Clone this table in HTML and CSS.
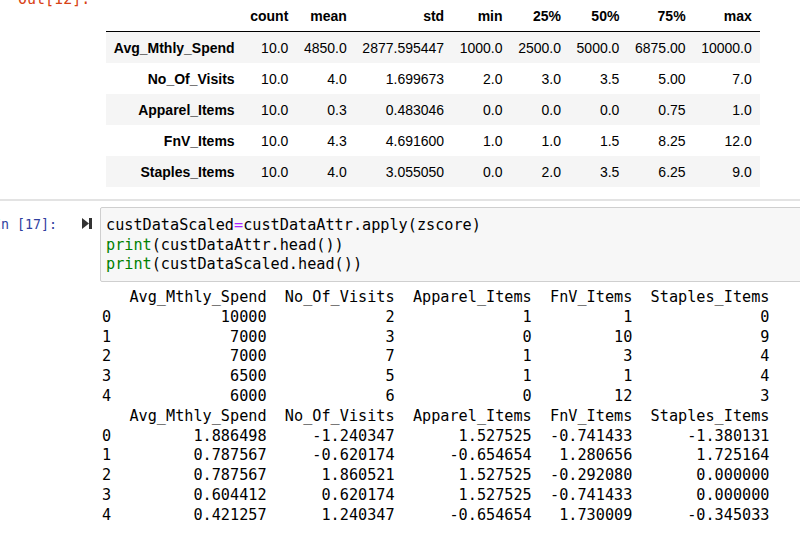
FILE: index.html
```html
<!DOCTYPE html>
<html>
<head>
<meta charset="utf-8">
<link rel="stylesheet" href="styles.css">
</head>
<body>
<div class="nb">
  <div class="out">
    <div class="out-prompt">Out[12]:</div>
    <table class="df">
      <thead>
        <tr><th></th><th>count</th><th>mean</th><th>std</th><th>min</th><th>25%</th><th>50%</th><th>75%</th><th>max</th></tr>
      </thead>
      <tbody>
        <tr><th>Avg_Mthly_Spend</th><td>10.0</td><td>4850.0</td><td>2877.595447</td><td>1000.0</td><td>2500.0</td><td>5000.0</td><td>6875.00</td><td>10000.0</td></tr>
        <tr><th>No_Of_Visits</th><td>10.0</td><td>4.0</td><td>1.699673</td><td>2.0</td><td>3.0</td><td>3.5</td><td>5.00</td><td>7.0</td></tr>
        <tr><th>Apparel_Items</th><td>10.0</td><td>0.3</td><td>0.483046</td><td>0.0</td><td>0.0</td><td>0.0</td><td>0.75</td><td>1.0</td></tr>
        <tr><th>FnV_Items</th><td>10.0</td><td>4.3</td><td>4.691600</td><td>1.0</td><td>1.0</td><td>1.5</td><td>8.25</td><td>12.0</td></tr>
        <tr><th>Staples_Items</th><td>10.0</td><td>4.0</td><td>3.055050</td><td>0.0</td><td>2.0</td><td>3.5</td><td>6.25</td><td>9.0</td></tr>
      </tbody>
    </table>
  </div>
  <div class="divider"></div>
  <div class="in">
    <div class="in-prompt"><span>In [17]:</span></div>
    <div class="run"><svg width="10" height="11" viewBox="0 0 10 11"><polygon points="0,0 7,5.5 0,11" fill="#333"/><rect x="7" y="0" width="3" height="11" fill="#333"/></svg></div>
    <div class="code-col">
<pre class="code">custDataScaled<span class="o">=</span>custDataAttr.apply(zscore)
<span class="k">print</span>(custDataAttr.head())
<span class="k">print</span>(custDataScaled.head())</pre>
<pre class="stdout">   Avg_Mthly_Spend  No_Of_Visits  Apparel_Items  FnV_Items  Staples_Items
0            10000             2              1          1              0
1             7000             3              0         10              9
2             7000             7              1          3              4
3             6500             5              1          1              4
4             6000             6              0         12              3
   Avg_Mthly_Spend  No_Of_Visits  Apparel_Items  FnV_Items  Staples_Items
0         1.886498     -1.240347       1.527525  -0.741433      -1.380131
1         0.787567     -0.620174      -0.654654   1.280656       1.725164
2         0.787567      1.860521       1.527525  -0.292080       0.000000
3         0.604412      0.620174       1.527525  -0.741433       0.000000
4         0.421257      1.240347      -0.654654   1.730009      -0.345033</pre>
    </div>
  </div>
</div>
</body>
</html>
```
FILE: styles.css
```css
html, body {
  margin: 0;
  padding: 0;
  background: #fff;
}
body {
  width: 800px;
  height: 533px;
  overflow: hidden;
}
.nb {
  display: flex;
  flex-direction: column;
}
.out {
  display: flex;
  align-items: flex-start;
}
.out-prompt {
  width: 106px;
  box-sizing: border-box;
  padding-left: 18px;
  margin-top: -10px;
  font: 15px/18px "DejaVu Sans Mono", monospace;
  color: #d84315;
  white-space: nowrap;
}
.df {
  border-collapse: collapse;
  font: 14px "Liberation Sans", Arial, sans-serif;
  color: #000;
}
.df th, .df td {
  padding: 0 7.8px;
  height: 31px;
  text-align: right;
  white-space: nowrap;
  vertical-align: middle;
}
.df thead th {
  border-bottom: 1px solid #000;
  font-weight: bold;
}
.df tbody th {
  font-weight: bold;
}
.df tbody tr:nth-child(odd) {
  background: #f5f5f5;
}
.divider {
  margin-top: 12px;
  height: 2px;
  background: #e3e3e3;
}
.in {
  display: flex;
  align-items: flex-start;
  margin-top: 6px;
}
.in-prompt {
  width: 57px;
  flex: none;
  display: flex;
  justify-content: flex-end;
  padding-top: 8px;
  font: 13.3px/19.5px "DejaVu Sans Mono", monospace;
  color: #303f9f;
  white-space: nowrap;
}
.run {
  flex: none;
  width: 10px;
  margin-left: 25px;
  margin-right: 8px;
  padding-top: 11px;
  line-height: 0;
}
.code-col {
  flex: 1;
  min-width: 0;
  margin-right: -20px;
}
.code {
  margin: 0;
  background: #f7f7f7;
  border: 1px solid #cfcfcf;
  border-radius: 2px;
  padding: 8px 5px 6px;
  font: 15.2px/19.5px "DejaVu Sans Mono", monospace;
  color: #000;
}
.code .o {
  color: #aa22ff;
}
.code .k {
  color: #008000;
}
.stdout {
  margin: 0;
  padding: 6.5px 0 0 2px;
  font: 15.2px/19.8px "DejaVu Sans Mono", monospace;
  color: #000;
  white-space: pre;
}
```
